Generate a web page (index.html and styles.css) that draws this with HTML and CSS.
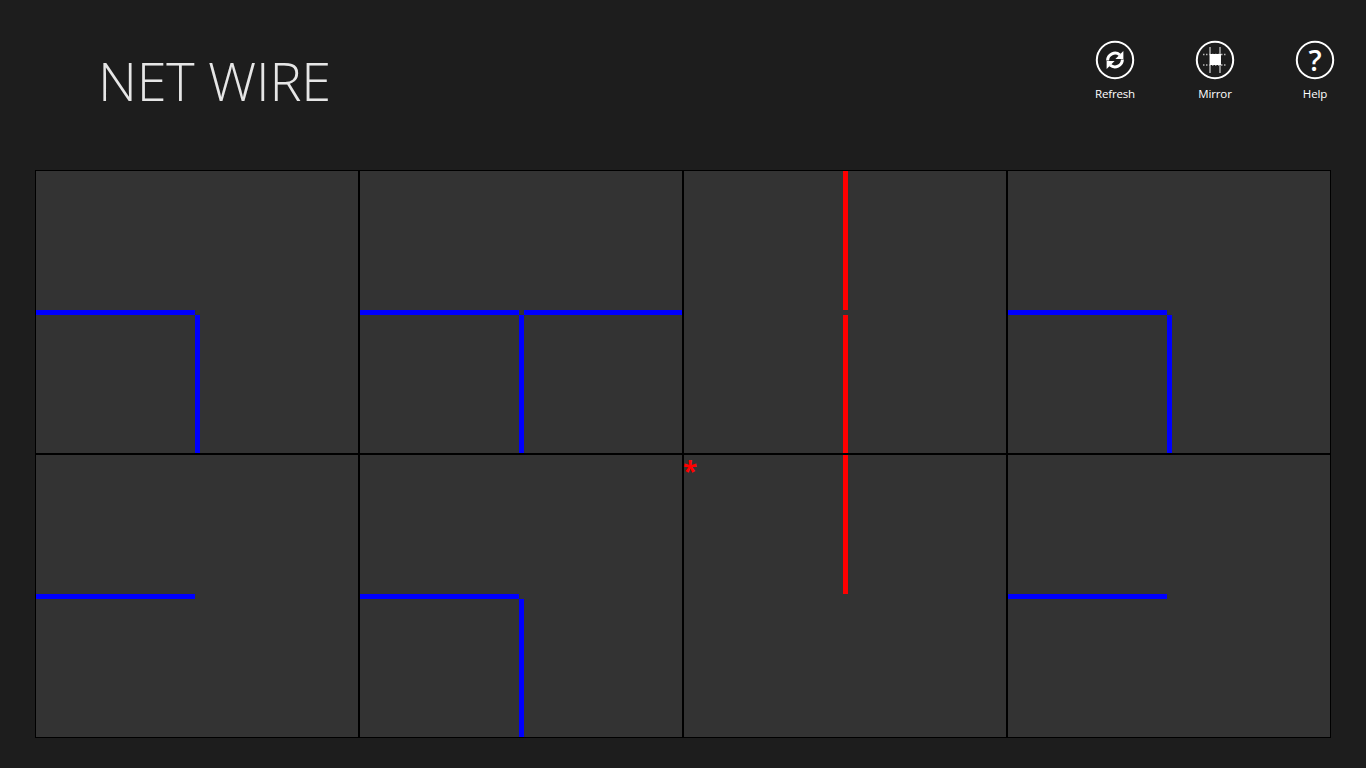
FILE: index.html
```html
<!DOCTYPE html>
<html lang="en">
<head>
    <meta charset="UTF-8">
    <meta name="viewport" content="width=device-width, initial-scale=1.0">
    <title>Net Wire</title>
    <link rel="stylesheet" href="styles.css">
</head>
<body>
    <header class="top-bar">
        <h1 class="title">NET WIRE</h1>
        <nav class="actions">
            <button class="action" type="button">
                <svg class="action-icon" viewBox="0 0 40 40" width="40" height="40">
                    <circle class="ring" cx="20" cy="20" r="18.2"/>
                    <g>
                        <path class="arc" d="M12.6 20.5A7.5 7.5 0 0 1 24.8 14.8"/>
                        <path class="fill" d="M28.4 11V19H20.4Z"/>
                    </g>
                    <g transform="rotate(180 20 20)">
                        <path class="arc" d="M12.6 20.5A7.5 7.5 0 0 1 24.8 14.8"/>
                        <path class="fill" d="M28.4 11V19H20.4Z"/>
                    </g>
                </svg>
                <span class="action-label">Refresh</span>
            </button>
            <button class="action" type="button">
                <svg class="action-icon" viewBox="0 0 40 40" width="40" height="40">
                    <circle class="ring" cx="20" cy="20" r="18.2"/>
                    <path class="guide" d="M15 7V33M25 7V33"/>
                    <path class="dots" d="M8 14.5H32M8 25H32"/>
                    <rect class="fill" x="15" y="14" width="11" height="11"/>
                </svg>
                <span class="action-label">Mirror</span>
            </button>
            <button class="action" type="button">
                <svg class="action-icon" viewBox="0 0 40 40" width="40" height="40">
                    <circle class="ring" cx="20" cy="20" r="18.2"/>
                    <text class="help-mark" x="20" y="30.5" text-anchor="middle">?</text>
                </svg>
                <span class="action-label">Help</span>
            </button>
        </nav>
    </header>

    <main class="board">
        <div class="cell"><i class="wire blue west"></i><i class="wire blue south"></i></div>
        <div class="cell"><i class="wire blue west"></i><i class="wire blue east"></i><i class="wire blue south"></i></div>
        <div class="cell"><i class="wire red north"></i><i class="wire red south"></i></div>
        <div class="cell"><i class="wire blue west"></i><i class="wire blue south"></i></div>
        <div class="cell"><i class="wire blue west"></i></div>
        <div class="cell"><i class="wire blue west"></i><i class="wire blue south"></i></div>
        <div class="cell source"><span class="marker">*</span><i class="wire red north"></i></div>
        <div class="cell"><i class="wire blue west"></i></div>
    </main>
</body>
</html>
```

FILE: styles.css
```css
body { margin: 0; height: 768px; overflow: hidden; background-color: #1d1d1d; font-family: "Open Sans", Arial, sans-serif; color: #fff; }

.top-bar { display: flex; justify-content: space-between; height: 170px; padding: 0 1px 0 98px; box-sizing: border-box; }
.title { margin: 43px 0 0; font-family: "Open Sans", sans-serif; font-size: 54px; font-weight: 300; line-height: 74px; color: #e6e6e6; letter-spacing: -0.25px; }

.actions { display: flex; padding-top: 40px; align-items: flex-start; }
.action { display: flex; flex-direction: column; align-items: center; width: 100px; padding: 0; border: none; background: none; color: #fff; font-family: inherit; }
.action-icon { display: block; }
.action-label { margin-top: 6px; font-size: 11.5px; line-height: 16px; letter-spacing: -0.15px; }

.ring { fill: none; stroke: #fff; stroke-width: 2; }
.arc { fill: none; stroke: #fff; stroke-width: 3; }
.fill { fill: #fff; }
.guide { fill: none; stroke: #8a8a8a; stroke-width: 2; }
.dots { fill: none; stroke: #b8b8b8; stroke-width: 1.5; stroke-dasharray: 1.5 1.5; }
.help-mark { fill: #fff; font-family: "Open Sans", sans-serif; font-size: 29px; font-weight: 600; }

.board { display: grid; grid-template-columns: repeat(4, 324px); grid-template-rows: repeat(2, 284px); margin-left: 35px; width: 1296px; }
.cell { position: relative; display: grid; grid-template-columns: 159px 5px 158px; grid-template-rows: 139px 5px 138px; background-color: #333; border: 1px solid #000; }

.wire { display: block; }
.blue { background-color: #0000ff; }
.red { background-color: #ff0000; }
.west { grid-column: 1; grid-row: 2; }
.east { grid-column: 3; grid-row: 2; }
.north { grid-column: 2; grid-row: 1; }
.south { grid-column: 2; grid-row: 3; }

.marker { position: absolute; left: -1px; top: 0; color: #ff0000; font-size: 26px; font-weight: 700; line-height: 32px; }
```
